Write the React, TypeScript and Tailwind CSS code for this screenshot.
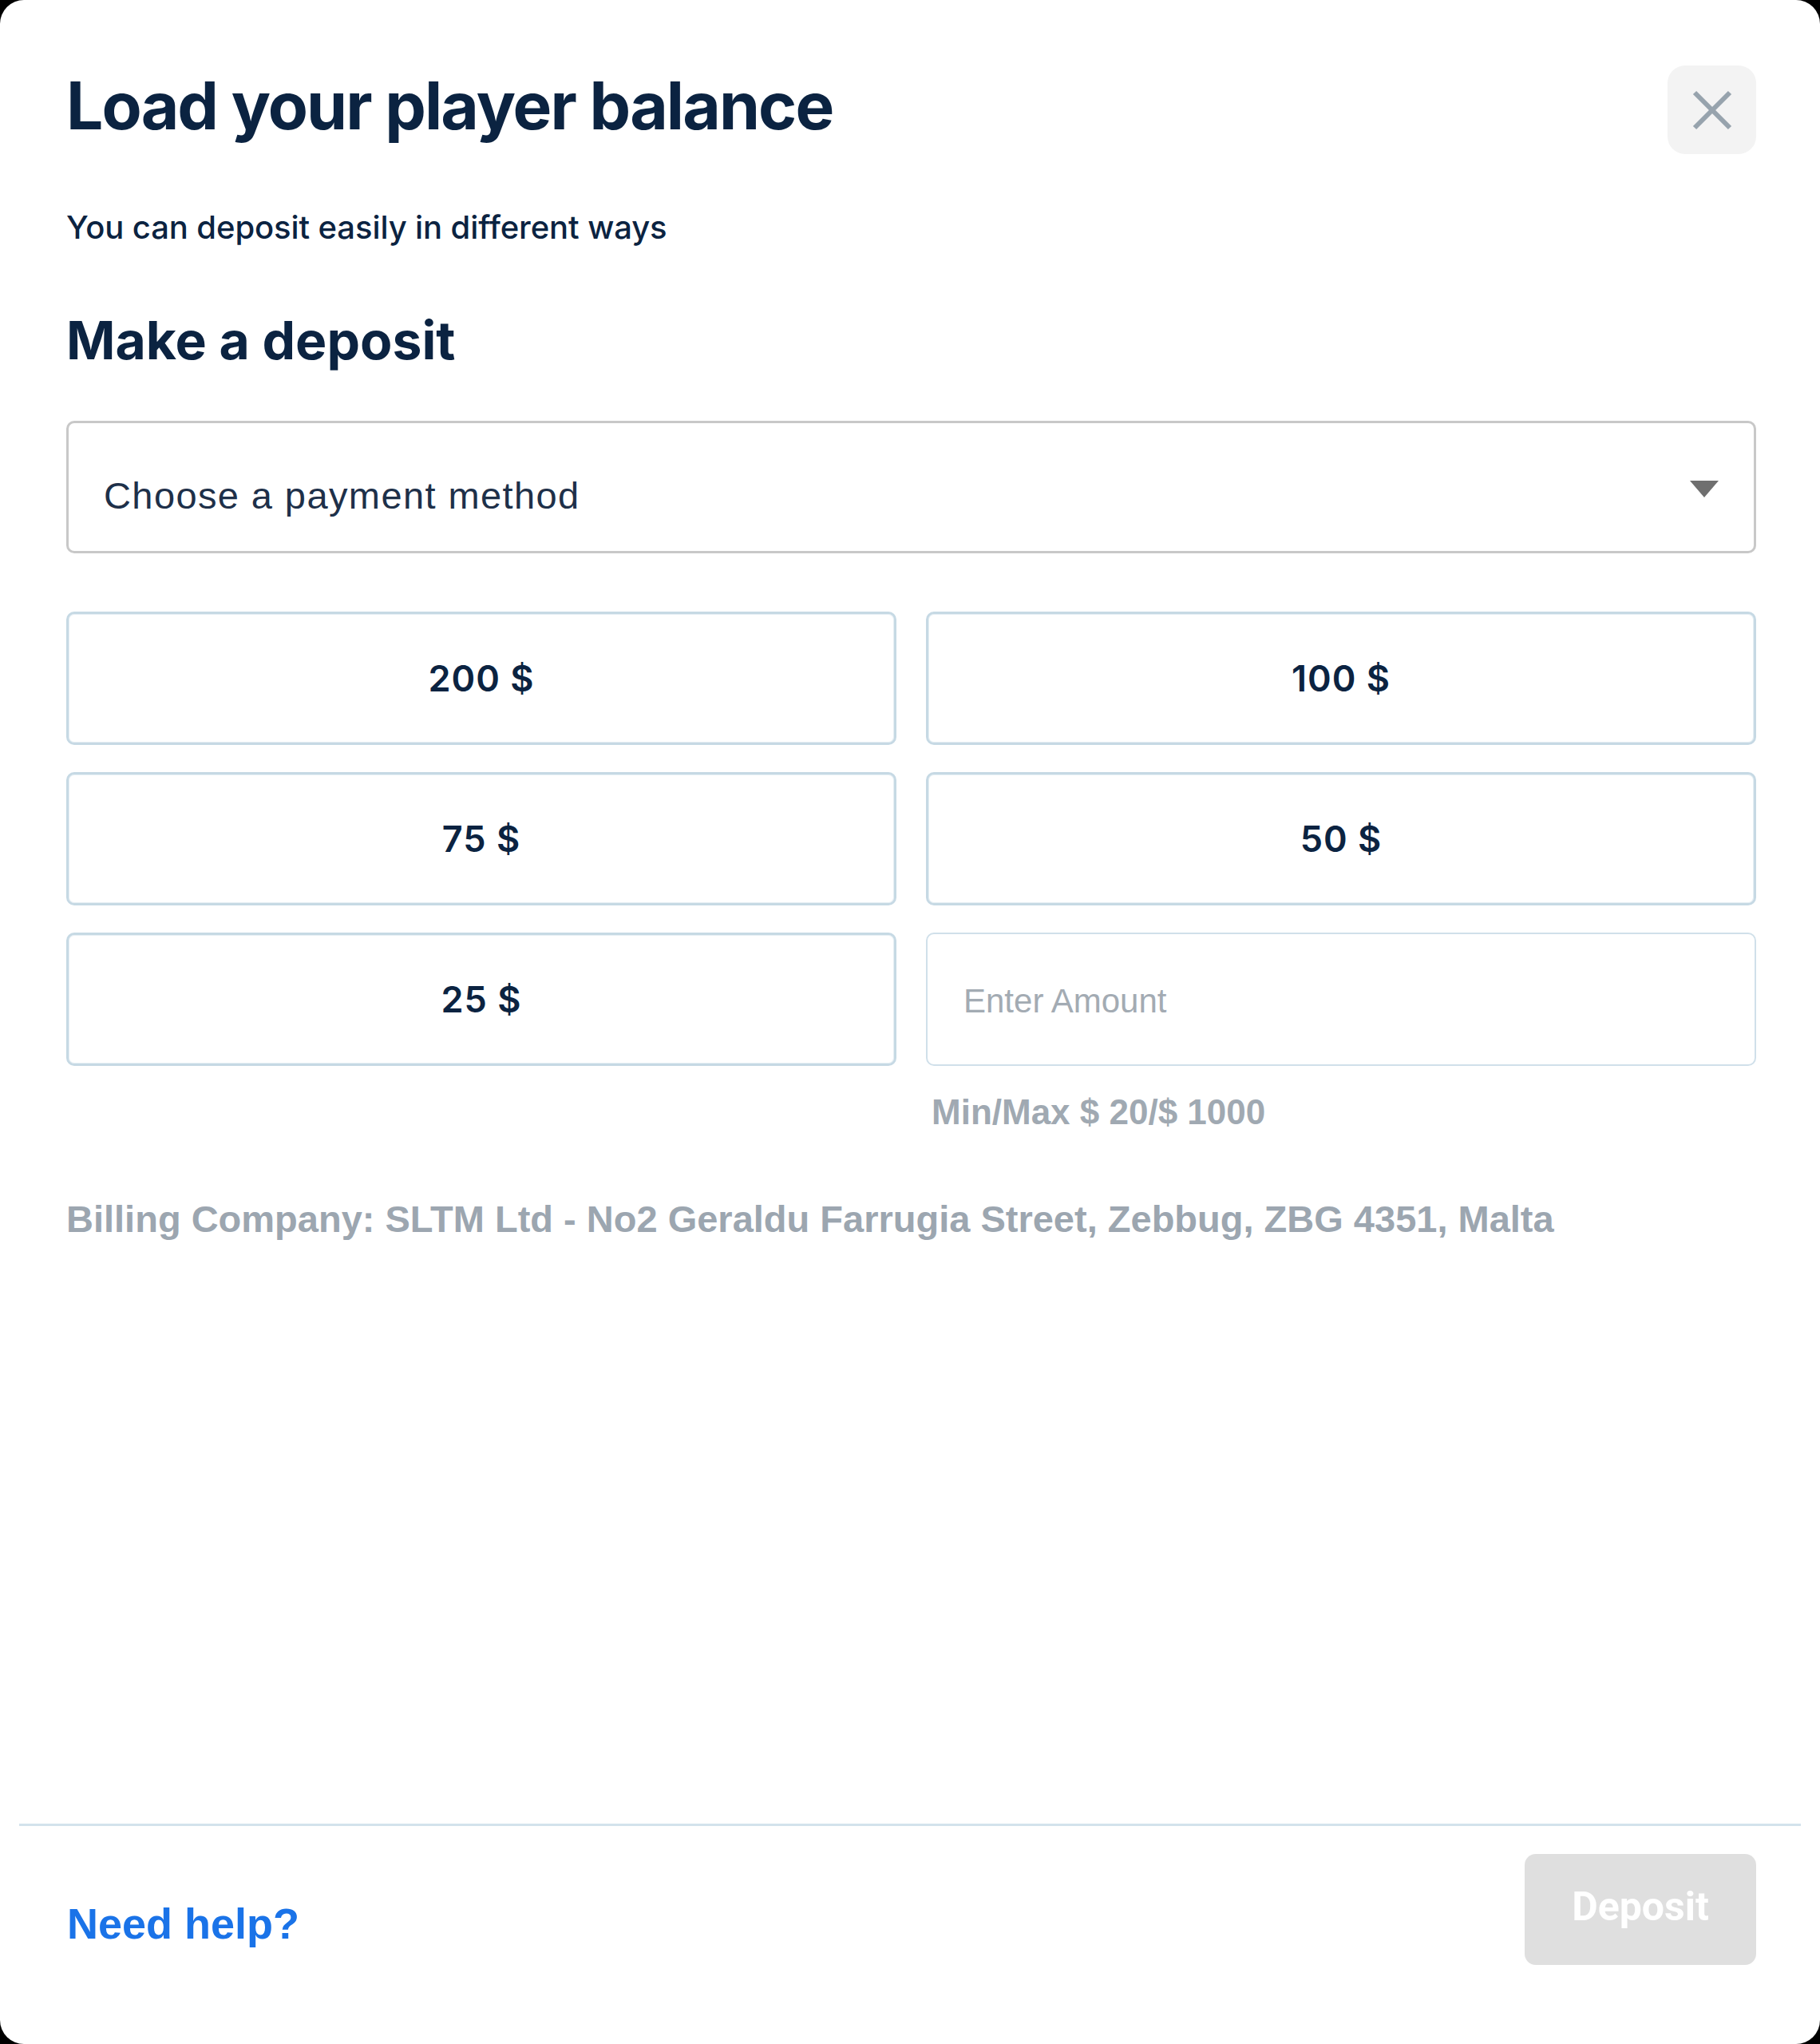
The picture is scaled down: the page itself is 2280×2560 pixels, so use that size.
import React from "react";

const geo = { fontFamily: "Inter, 'Noto Sans', sans-serif" };
const arial = { fontFamily: "'Liberation Sans', Arial, sans-serif" };

function AmountButton({ label }: { label: string }) {
  return (
    <button
      type="button"
      className="h-[167px] w-full rounded-[10px] border-[3px] border-[#c6d9e4] bg-white text-[45px] font-semibold leading-none tracking-[1px] text-[#0b2341] flex items-center justify-center shadow-[inset_0_0_0_1px_#e6eff4]"
      style={geo}
    >
      {label}
    </button>
  );
}

export default function App() {
  return (
    <div className="w-[2280px] h-[2560px] bg-black">
      <div className="w-full h-full bg-white rounded-[30px] flex flex-col overflow-hidden">
        <div className="pl-[83px] pr-[80px]">
          <div className="flex justify-between items-start pt-[82px]">
            <h1
              className="mt-[10px] text-[82px] leading-[82px] font-bold tracking-[-1.9px] text-[#0b2341]"
              style={geo}
            >
              Load your player balance
            </h1>
            <button
              type="button"
              className="w-[111px] h-[111px] rounded-[22px] bg-[#f3f3f3] flex items-center justify-center"
            >
              <svg width="50" height="50" viewBox="0 0 50 50">
                <line x1="3" y1="3" x2="47" y2="47" stroke="#97a3ad" strokeWidth="6" />
                <line x1="47" y1="3" x2="3" y2="47" stroke="#97a3ad" strokeWidth="6" />
              </svg>
            </button>
          </div>

          <p
            className="mt-[72px] text-[40px] leading-[40px] font-medium tracking-[-0.1px] text-[#0b2341]"
            style={geo}
          >
            You can deposit easily in different ways
          </p>

          <h2
            className="mt-[88px] text-[66px] leading-[66px] font-bold tracking-[0px] text-[#0b2341]"
            style={geo}
          >
            Make a deposit
          </h2>

          <div className="mt-[68px] h-[166px] rounded-[10px] border-[3px] border-[#c8c8c8] flex items-center justify-between pl-[44px] pr-[44px] pt-[20px]">
            <span className="text-[47px] leading-none tracking-[1.4px] text-[#1e3049]" style={arial}>
              Choose a payment method
            </span>
            <svg width="36" height="21" viewBox="0 0 36 21" className="-mt-[16px]">
              <polygon points="0,0 36,0 18,21" fill="#6f6f6f" />
            </svg>
          </div>

          <div className="mt-[73px] grid grid-cols-2 gap-x-[37px] gap-y-[34px]">
            <AmountButton label="200 $" />
            <AmountButton label="100 $" />
            <AmountButton label="75 $" />
            <AmountButton label="50 $" />
            <AmountButton label="25 $" />
            <div>
              <div className="h-[167px] rounded-[10px] border-[2px] border-[#d0e0ea] flex items-center pl-[45px] pt-[4px]">
                <span className="text-[42px] leading-none text-[#a3abb3]" style={arial}>
                  Enter Amount
                </span>
              </div>
            </div>
          </div>

          <div className="grid grid-cols-2 gap-x-[37px]">
            <div />
            <p
              className="mt-[36px] pl-[7px] text-[44px] leading-[43px] font-bold tracking-[0px] text-[#a0a9b2]"
              style={arial}
            >
              Min/Max $ 20/$ 1000
            </p>
          </div>

          <p
            className="mt-[89px] text-[47px] leading-[47px] font-bold text-[#9ca6b0]"
            style={arial}
          >
            Billing Company: SLTM Ltd - No2 Geraldu Farrugia Street, Zebbug, ZBG 4351, Malta
          </p>
        </div>

        <div className="mt-auto mx-[24px] border-t-[3px] border-[#d3e3ec]">
          <div className="flex justify-between items-start pl-[60px] pr-[56px] pt-[35px] pb-[99px]">
            <a
              href="#"
              className="mt-[60px] text-[54px] leading-[54px] font-bold text-[#1a73e8]"
              style={arial}
            >
              Need help?
            </a>
            <button
              type="button"
              className="w-[290px] h-[139px] rounded-[14px] bg-[#dfdfdf] text-white text-[50px] font-bold leading-none flex items-center justify-center pb-[8px]"
              style={{ fontFamily: "Roboto, 'Liberation Sans', sans-serif" }}
            >
              Deposit
            </button>
          </div>
        </div>
      </div>
    </div>
  );
}
